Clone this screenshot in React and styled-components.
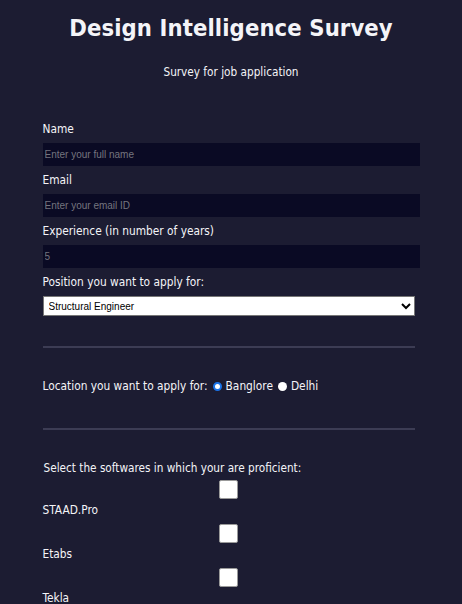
import React from "react";
import styled, { createGlobalStyle } from "styled-components";

const Global = createGlobalStyle`
  html, body { margin: 0; padding: 0; background: #1c1c32; }
  body { font-family: "DejaVu Sans Condensed", "DejaVu Sans", sans-serif; color: #f4f4f8; }
`;

const Page = styled.div`
  display: flex;
  flex-direction: column;
  align-items: center;
  padding-top: 12px;
`;

const Title = styled.h1`
  margin: 0;
  font-size: 23.6px;
  font-weight: bold;
  line-height: 32px;
  letter-spacing: 0.1px;
`;

const Subtitle = styled.p`
  margin: 21px 0 0;
  font-size: 11.7px;
  line-height: 14px;
`;

const Form = styled.form`
  width: 377px;
  margin-top: 43px;
  display: flex;
  flex-direction: column;
`;

const Label = styled.label`
  font-size: 11.8px;
  line-height: 15px;
  display: block;
  margin-bottom: 6px;
`;

const Field = styled.div`
  display: flex;
  flex-direction: column;
  margin-bottom: 7px;
`;

const TextInput = styled.input`
  box-sizing: border-box;
  width: 377px;
  height: 23px;
  border: none;
  outline: none;
  background: #0a0a24;
  color: #8a8a98;
  font-family: "Liberation Sans", Arial, sans-serif;
  font-size: 10px;
  padding: 0 2px;
  &::placeholder { color: #75757f; }
`;

const Select = styled.select`
  box-sizing: border-box;
  width: 372px;
  height: 20px;
  background: #fff;
  border: 1px solid #767676;
  border-radius: 0;
  color: #000;
  font-family: "Liberation Sans", Arial, sans-serif;
  font-size: 10px;
  padding: 0 1px;
`;

const Rule = styled.div`
  width: 372px;
  height: 2px;
  background: #3c3c54;
  margin: ${(p) => p.$top || 0}px 0 0;
`;

const LocationRow = styled.div`
  display: flex;
  align-items: center;
  font-size: 11.8px;
  line-height: 15px;
  margin-top: 31px;
  margin-bottom: 34px;
  gap: 4px;
`;

const Radio = styled.span`
  display: inline-block;
  width: 9px;
  height: 9px;
  border-radius: 50%;
  box-sizing: border-box;
  background: #fff;
  margin-left: 1px;
  border: ${(p) => (p.$checked ? "2px solid #1a73e8" : "none")};
`;

const Question = styled.p`
  margin: 31px 0 0 1px;
  font-size: 11.7px;
  line-height: 14px;
`;

const SoftwareList = styled.div`
  display: flex;
  flex-direction: column;
  width: 372px;
  margin-top: 5px;
`;

const Software = styled.div`
  display: flex;
  flex-direction: column;
  margin-bottom: 6px;
`;

const Box = styled.span`
  align-self: center;
  width: 19px;
  height: 19px;
  background: #fff;
  border: 1px solid #9a9a9a;
  border-radius: 2px;
  box-sizing: border-box;
  margin-bottom: 4px;
`;

const SoftLabel = styled.span`
  font-size: 11.8px;
  line-height: 15px;
`;

export default function App() {
  return (
    <>
      <Global />
      <Page>
        <Title>Design Intelligence Survey</Title>
        <Subtitle>Survey for job application</Subtitle>
        <Form>
          <Field>
            <Label>Name</Label>
            <TextInput placeholder="Enter your full name" />
          </Field>
          <Field>
            <Label>Email</Label>
            <TextInput placeholder="Enter your email ID" />
          </Field>
          <Field>
            <Label>Experience (in number of years)</Label>
            <TextInput placeholder="5" />
          </Field>
          <Field>
            <Label>Position you want to apply for:</Label>
            <Select defaultValue="se">
              <option value="se">Structural Engineer</option>
            </Select>
          </Field>
          <Rule $top={23} />
          <LocationRow>
            <span>Location you want to apply for:</span>
            <Radio $checked />
            <span>Banglore</span>
            <Radio />
            <span>Delhi</span>
          </LocationRow>
          <Rule />
          <Question>Select the softwares in which your are proficient:</Question>
          <SoftwareList>
            <Software>
              <Box />
              <SoftLabel>STAAD.Pro</SoftLabel>
            </Software>
            <Software>
              <Box />
              <SoftLabel>Etabs</SoftLabel>
            </Software>
            <Software>
              <Box />
              <SoftLabel>Tekla</SoftLabel>
            </Software>
          </SoftwareList>
        </Form>
      </Page>
    </>
  );
}
